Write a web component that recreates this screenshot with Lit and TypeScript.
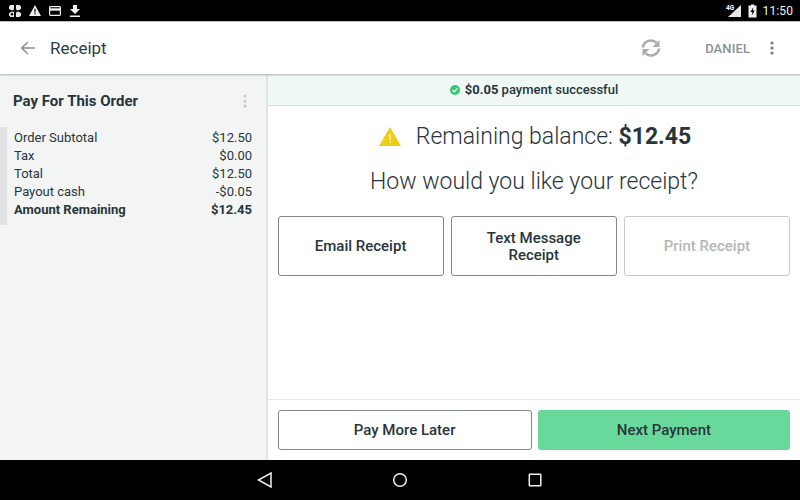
import { LitElement, html, css } from "lit";
import { customElement } from "lit/decorators.js";

const rows = [
  ["Order Subtotal", "$12.50"],
  ["Tax", "$0.00"],
  ["Total", "$12.50"],
  ["Payout cash", "-$0.05"],
];

@customElement("app-root")
export class AppRoot extends LitElement {
  static styles = css`
    :host { display: flex; flex-direction: column; width: 800px; height: 500px; overflow: hidden; font-family: Roboto, sans-serif; color: #28353c; background: #fff; }
    * { box-sizing: border-box; }
    svg { display: block; flex: none; }
    .status { height: 22px; flex: none; background: #000; border-bottom: 1px solid #7fdca8; display: flex; align-items: center; padding: 0 7px 0 9px; color: #fff; gap: 8px; position: relative; z-index: 3; }
    .spacer { flex: 1; }
    .time { font-size: 12px; letter-spacing: 0.1px; color: #f2f2f2; }
    .sys { display: flex; align-items: center; gap: 6px; }
    .header { height: 52px; flex: none; display: flex; align-items: center; padding: 0 26px 0 20px; background: #fff; box-shadow: 0 1px 2px rgba(0,0,0,.28); position: relative; z-index: 2; }
    .title { font-size: 17px; margin-left: 14px; color: #2f3c43; }
    .sync { margin-right: 44px; }
    .user { font-size: 13px; font-weight: 500; color: #8a9296; margin-right: 20px; letter-spacing: .1px; }
    .main { flex: 1; display: flex; min-height: 0; }
    .side { width: 268px; flex: none; background: #f3f5f5; border-right: 2px solid #e2e4e4; padding-top: 18px; }
    .side-head { display: flex; justify-content: space-between; align-items: center; height: 18px; padding: 0 19px 0 13px; font-size: 15px; font-weight: 700; }
    .summary { margin-top: 17px; border-left: 7px solid #dfe1e2; height: 98px; padding: 2px 14px 0 7px; font-size: 13px; }
    .row { display: flex; justify-content: space-between; height: 18px; line-height: 18px; }
    .row.strong { font-weight: 700; }
    .content { flex: 1; display: flex; flex-direction: column; min-width: 0; }
    .banner { height: 32px; flex: none; background: #eff8f4; border-bottom: 1px solid #b6ecd0; display: flex; align-items: center; justify-content: center; gap: 5px; font-size: 13px; font-weight: 500; }
    .banner b { font-weight: 700; }
    .balance { display: flex; justify-content: center; align-items: center; margin-top: 15px; height: 30px; font-size: 23px; font-weight: 300; gap: 15px; padding-left: 2px; }
    .balance b { font-weight: 700; }
    .ask { text-align: center; font-size: 23px; font-weight: 300; margin-top: 15px; height: 32px; line-height: 32px; }
    .opts { display: flex; gap: 7px; padding: 0 10px 0 9.5px; margin-top: 18px; }
    .btn { border: 1px solid #7f898d; border-radius: 3px; background: #fff; font: 500 15px/17px Roboto, sans-serif; color: #28353c; display: flex; align-items: center; justify-content: center; text-align: center; padding-top: 1px; }
    .opts .btn { flex: 1; height: 60px; padding: 1px 20px 0; }
    .btn.off { border-color: #c6cacc; color: #b3b8bb; }
    .foot { margin-top: auto; height: 61px; flex: none; border-top: 1px solid #e6e8e8; display: flex; gap: 6px; padding: 10px 10px 10px 9.5px; }
    .foot .btn { flex: 1; height: 40px; }
    .btn.go { background: #69d99b; border: none; }
    .nav { height: 40px; flex: none; background: #000; display: flex; justify-content: center; align-items: center; gap: 107px; }
  `;

  render() {
    return html`
      <div class="status">
        <svg width="12" height="12" viewBox="0 0 12 12"><path fill="#e8e8e8" d="M1.500 0H5v3.500l-.5 1.800H2L0 3.700V1.500zM7 0h3.500L12 1.500v2.200L10 5.300H7.500L7 3.500zM7.500 6.700H10l2 1.600v2.200L10.500 12H7V8.500zM2 6.700h3V8.500L5 12H1.500L0 10.500V8.300z"/><circle cx="3" cy="9.300" r="1.200" fill="#000"/></svg>
        <svg width="12" height="11" viewBox="0 0 12 11"><path fill="#f2f2f2" fill-rule="evenodd" d="M6 0l6 11H0zM5.400 3.800v3.700h1.200V3.800zM5.400 8.200v1.200h1.200V8.200z"/></svg>
        <svg width="12" height="10" viewBox="0 0 12 10"><rect x=".6" y=".6" width="10.800" height="8.800" rx=".8" fill="none" stroke="#efefef" stroke-width="1.200"/><path fill="#efefef" d="M1 2.300h10v2.400H1z"/></svg>
        <svg width="10" height="12" viewBox="0 0 10 12" style="margin-left:1px"><path fill="#f2f2f2" d="M3 0h4v4h3L5 9 0 4h3zM0 10.500h10V12H0z"/></svg>
        <div class="spacer"></div>
        <div class="sys">
          <svg width="15" height="14" viewBox="0 0 15 14"><path fill="#e8e8e8" d="M15 1v12H2z"/><text x="0" y="6" font-size="6.500" font-weight="700" fill="#fff" font-family="Roboto">4G</text></svg>
          <svg width="9" height="14" viewBox="0 0 9 14" style="margin-left:1px"><path fill="#f0f0f0" d="M3 0.500h3v1H8.500v12H.5v-12H3z"/><path fill="#000" d="M5.300 3L2.500 8h1.800L3.700 11.500 6.800 6.500H4.800z"/></svg>
          <span class="time">11:50</span>
        </div>
      </div>
      <div class="header">
        <svg width="16" height="14" viewBox="0 0 16 14"><path fill="none" stroke="#8a9397" stroke-width="1.600" d="M15 7H2M7.800 1L1.800 7l6 6"/></svg>
        <span class="title">Receipt</span>
        <div class="spacer"></div>
        <svg class="sync" width="20" height="20" viewBox="0 0 20 20"><g><path fill="none" stroke="#a9aeb0" stroke-width="2.600" d="M1.800 9.500A8.200 8.200 0 0 1 15.500 4.800"/><path fill="#a9aeb0" d="M18.500 2V9H11.500z"/></g><g transform="rotate(180 10 10)"><path fill="none" stroke="#a9aeb0" stroke-width="2.600" d="M1.800 9.500A8.200 8.200 0 0 1 15.500 4.800"/><path fill="#a9aeb0" d="M18.500 2V9H11.500z"/></g></svg>
        <span class="user">DANIEL</span>
        <svg width="4" height="14" viewBox="0 0 4 14"><circle cx="2" cy="2" r="1.600" fill="#727c81"/><circle cx="2" cy="7" r="1.600" fill="#727c81"/><circle cx="2" cy="12" r="1.600" fill="#727c81"/></svg>
      </div>
      <div class="main">
        <div class="side">
          <div class="side-head">
            <span>Pay For This Order</span>
            <svg width="4" height="14" viewBox="0 0 4 14"><circle cx="2" cy="2" r="1.500" fill="#c4c8ca"/><circle cx="2" cy="7" r="1.500" fill="#c4c8ca"/><circle cx="2" cy="12" r="1.500" fill="#c4c8ca"/></svg>
          </div>
          <div class="summary">
            ${rows.map(([a, b]) => html`<div class="row"><span>${a}</span><span>${b}</span></div>`)}
            <div class="row strong"><span>Amount Remaining</span><span>$12.45</span></div>
          </div>
        </div>
        <div class="content">
          <div class="banner">
            <svg width="10" height="10" viewBox="0 0 10 10"><circle cx="5" cy="5" r="5" fill="#36c777"/><path fill="none" stroke="#fff" stroke-width="1.300" d="M2.600 5.100l1.700 1.700 3.200-3.400"/></svg>
            <span><b>$0.05</b> payment successful</span>
          </div>
          <div class="balance">
            <svg width="22" height="19" viewBox="0 0 22 19"><path fill="#efcf16" d="M11 0L22 19H0z"/><path fill="#fff" opacity=".75" d="M10.300 7h1.400v6h-1.400zM10.300 14.500h1.400V16h-1.400z"/></svg>
            <span>Remaining balance: <b>$12.45</b></span>
          </div>
          <div class="ask">How would you like your receipt?</div>
          <div class="opts">
            <div class="btn">Email Receipt</div>
            <div class="btn">Text Message Receipt</div>
            <div class="btn off">Print Receipt</div>
          </div>
          <div class="foot">
            <div class="btn">Pay More Later</div>
            <div class="btn go">Next Payment</div>
          </div>
        </div>
      </div>
      <div class="nav">
        <svg width="28" height="18" viewBox="0 0 28 18"><path fill="none" stroke="#f0f0f0" stroke-width="1.500" d="M20 2v14L7.500 9z"/></svg>
        <svg width="28" height="18" viewBox="0 0 28 18"><circle cx="14" cy="9" r="6.300" fill="none" stroke="#f0f0f0" stroke-width="1.500"/></svg>
        <svg width="28" height="18" viewBox="0 0 28 18"><rect x="8.300" y="3.300" width="11.500" height="11.500" rx=".5" fill="none" stroke="#f0f0f0" stroke-width="1.500"/></svg>
      </div>
    `;
  }
}
